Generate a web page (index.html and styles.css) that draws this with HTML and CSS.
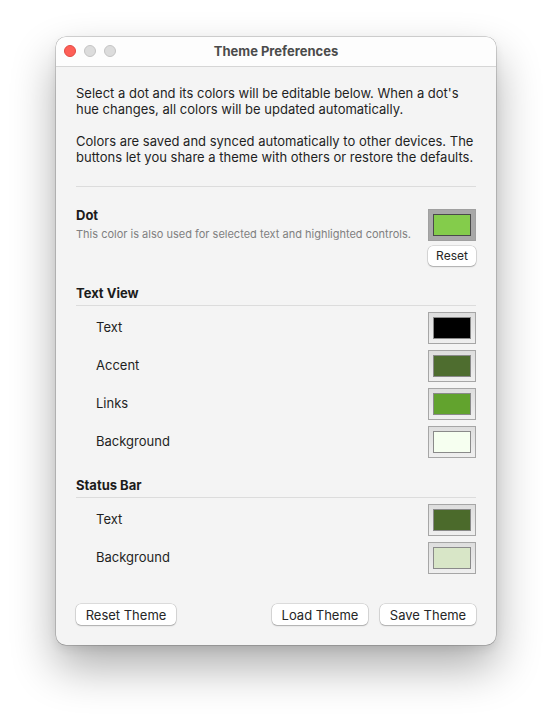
FILE: index.html
```html
<!DOCTYPE html>
<html>
<head>
<meta charset="utf-8">
<link rel="stylesheet" href="styles.css">
</head>
<body>
<div class="window">
  <div class="titlebar">
    <div class="lights">
      <span class="light red"></span>
      <span class="light"></span>
      <span class="light"></span>
    </div>
    <div class="title">Theme Preferences</div>
  </div>
  <div class="content">
    <p class="para">Select a dot and its colors will be editable below. When a dot's<br>hue changes, all colors will be updated automatically.</p>
    <p class="para second">Colors are saved and synced automatically to other devices. The<br>buttons let you share a theme with others or restore the defaults.</p>
    <div class="sep top-sep"></div>

    <div class="dot-row">
      <div class="dot-text">
        <div class="label-bold">Dot</div>
        <div class="sub">This color is also used for selected text and highlighted controls.</div>
      </div>
      <div class="dot-controls">
        <div class="swatch selected"><div class="chip c-dot"></div></div>
        <button class="btn small">Reset</button>
      </div>
    </div>

    <div class="section">
      <div class="label-bold">Text View</div>
      <div class="sep"></div>
      <div class="rows">
        <div class="row"><span class="row-label">Text</span><div class="swatch"><div class="chip c-black"></div></div></div>
        <div class="row"><span class="row-label">Accent</span><div class="swatch"><div class="chip c-accent"></div></div></div>
        <div class="row"><span class="row-label">Links</span><div class="swatch"><div class="chip c-links"></div></div></div>
        <div class="row"><span class="row-label">Background</span><div class="swatch"><div class="chip c-bg"></div></div></div>
      </div>
    </div>

    <div class="section">
      <div class="label-bold">Status Bar</div>
      <div class="sep"></div>
      <div class="rows">
        <div class="row"><span class="row-label">Text</span><div class="swatch"><div class="chip c-stext"></div></div></div>
        <div class="row"><span class="row-label">Background</span><div class="swatch"><div class="chip c-sbg"></div></div></div>
      </div>
    </div>

    <div class="footer">
      <button class="btn w100">Reset Theme</button>
      <div class="footer-right">
        <button class="btn w96">Load Theme</button>
        <button class="btn w96">Save Theme</button>
      </div>
    </div>
  </div>
</div>
</body>
</html>
```
FILE: styles.css
```css
html {
  margin: 0;
  padding: 0;
  background: #ffffff;
  height: 100%;
}
body {
  margin: 0;
  min-height: 100%;
  box-sizing: border-box;
  font-family: "Inter", "Liberation Sans", Arial, sans-serif;
  color: #1f1f1f;
  padding-top: 37px;
  padding-left: 56px;
}
.window {
  width: 440px;
  height: 608px;
  box-sizing: border-box;
  background: #f4f4f4;
  border-radius: 10px;
  box-shadow: 0 0 0 0.5px rgba(0,0,0,0.3), 0 22px 45px rgba(0,0,0,0.32), 0 4px 10px rgba(0,0,0,0.08);
  overflow: hidden;
  display: flex;
  flex-direction: column;
}
.titlebar {
  height: 30px;
  box-sizing: border-box;
  padding-bottom: 2px;
  flex: none;
  background: #fdfdfd;
  border-bottom: 1px solid #d6d6d6;
  position: relative;
  display: flex;
  align-items: center;
  justify-content: center;
}
.lights {
  position: absolute;
  left: 8px;
  top: 8px;
  display: flex;
  gap: 8px;
}
.light {
  width: 12px;
  height: 12px;
  border-radius: 50%;
  box-sizing: border-box;
  background: #dcdcdc;
  border: 0.5px solid #c4c4c4;
}
.light.red {
  background: #fe5f57;
  border-color: #e14942;
}
.title {
  font-size: 13px;
  line-height: 16px;
  font-weight: 700;
  color: #4b4b4b;
}
.content {
  padding: 18px 20px 20px 20px;
  display: flex;
  flex-direction: column;
  flex: 1;
}
.para {
  margin: 0;
  font-size: 13px;
  line-height: 16px;
  color: #1f1f1f;
}
.para.second {
  margin-top: 16px;
}
.sep {
  height: 1px;
  background: #dcdcdc;
}
.top-sep {
  margin-top: 21px;
}
.dot-row {
  margin-top: 21px;
  display: flex;
  justify-content: space-between;
}
.dot-text {
  display: flex;
  flex-direction: column;
}
.label-bold {
  font-size: 13px;
  line-height: 14px;
  font-weight: 700;
  color: #1c1c1c;
}
.sub {
  font-size: 11px;
  line-height: 14px;
  color: #808080;
  margin-top: 5px;
}
.dot-controls {
  display: flex;
  flex-direction: column;
  align-items: flex-end;
  gap: 5px;
  margin-top: 1px;
}
.swatch {
  width: 48px;
  height: 32px;
  box-sizing: border-box;
  border: 1px solid #a6a6a6;
  background: linear-gradient(#dedede, #efefef);
  padding: 4px;
  flex: none;
}
.swatch.selected {
  background: #a8a8a8;
  border-color: #a0a0a0;
}
.chip {
  width: 100%;
  height: 100%;
  box-sizing: border-box;
  border: 1px solid #8a8a8a;
}
.swatch.selected .chip {
  border-color: #4a4a4a;
}
.c-dot { background: #84cc4b; }
.c-black { background: #000000; }
.c-accent { background: #4e6d2f; }
.c-links { background: #62a32e; }
.c-bg { background: #f6fff0; }
.c-stext { background: #4b6a2b; }
.c-sbg { background: #d8e6c7; }

.btn {
  font-family: "Inter", "Liberation Sans", Arial, sans-serif;
  font-size: 13px;
  color: #262626;
  background: #ffffff;
  border: none;
  border-radius: 5px;
  box-shadow: 0 0 0 0.5px rgba(0,0,0,0.2), 0 1px 1.5px rgba(0,0,0,0.22);
  height: 20px;
  padding: 0;
  line-height: 20px;
}
.btn.small {
  width: 48px;
  font-size: 12px;
}
.btn.w100 { width: 100px; height: 21px; }
.btn.w96 { width: 96px; height: 21px; }

.section {
  margin-top: 20px;
  display: flex;
  flex-direction: column;
}
.section .label-bold {
  margin-bottom: 5px;
}
.rows {
  margin-top: 6px;
  display: flex;
  flex-direction: column;
  gap: 6px;
}
.row {
  display: flex;
  align-items: center;
  justify-content: space-between;
  height: 32px;
}
.row-label {
  padding-left: 20px;
  font-size: 13px;
  line-height: 16px;
  color: #1f1f1f;
  margin-bottom: 2px;
}
.footer {
  margin-top: auto;
  display: flex;
  justify-content: space-between;
}
.footer-right {
  display: flex;
  gap: 12px;
}
```
